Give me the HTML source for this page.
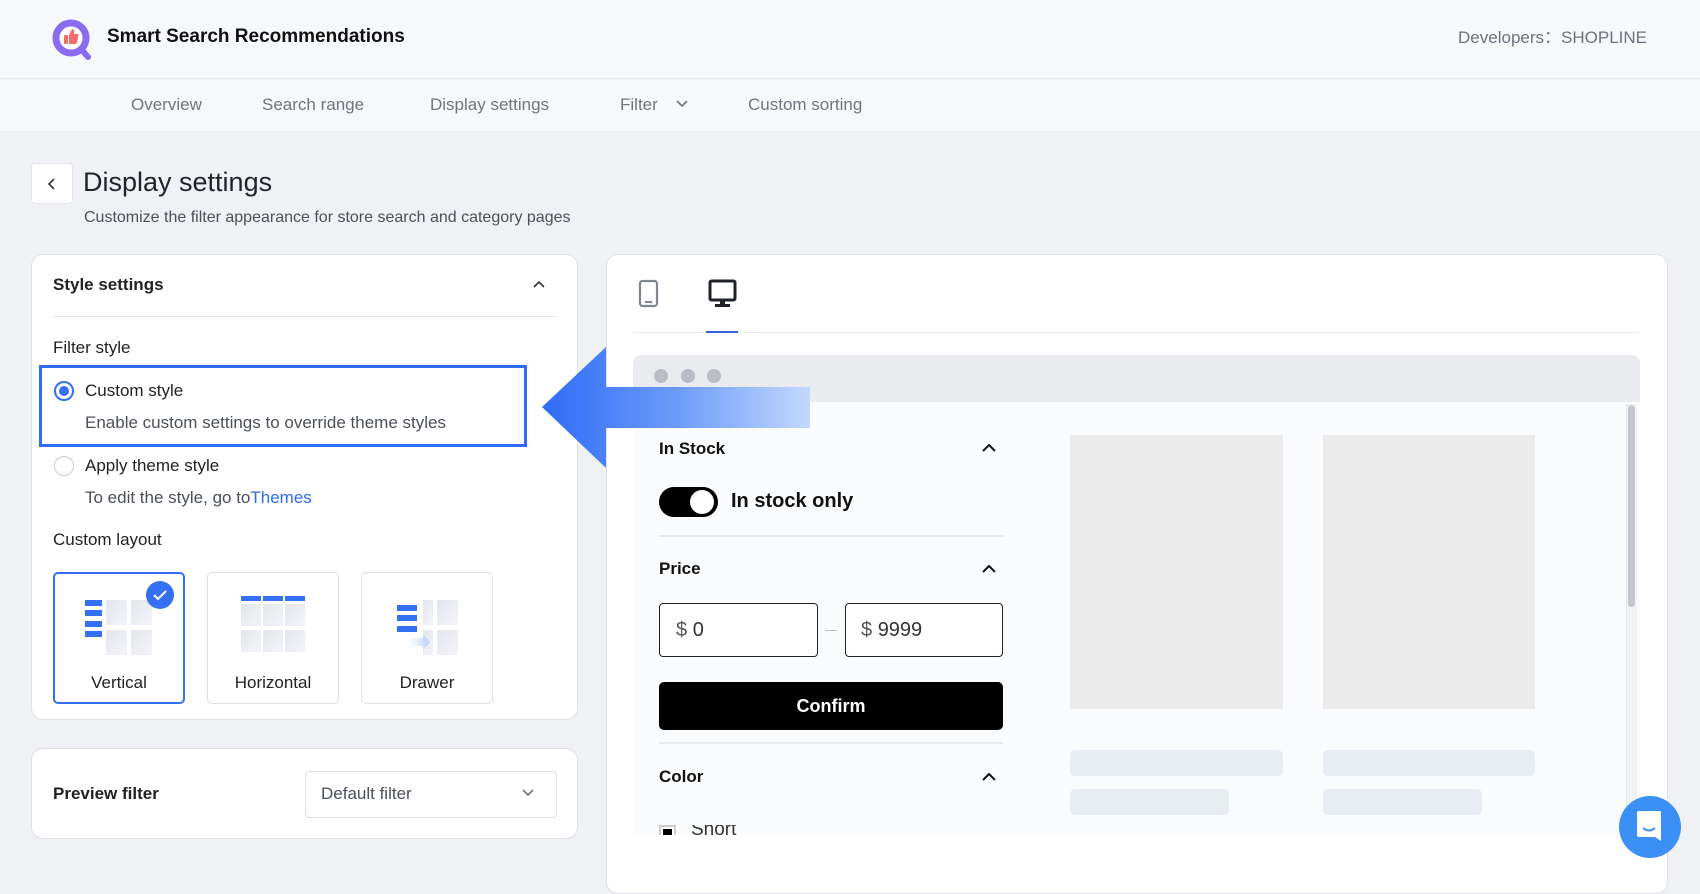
<!DOCTYPE html>
<html><head><meta charset="utf-8"><style>
*{margin:0;padding:0;box-sizing:border-box}
body{width:1700px;height:866px;overflow:hidden;background:#f0f1f5;font-family:"Liberation Sans",sans-serif;color:#1f2329;position:relative}
.a{position:absolute}
.t{position:absolute;white-space:nowrap;line-height:24px}
</style></head><body>
<!-- header -->
<div class="a" style="left:0;top:0;width:1700px;height:79px;background:#f7f8fb;border-bottom:1px solid #e6e8ee"></div>
<svg class="a" style="left:50px;top:18px" width="46" height="44" viewBox="0 0 46 44">
<circle cx="21" cy="20" r="15" fill="none" stroke="#8b6cf0" stroke-width="7"/>
<line x1="31" y1="31" x2="38" y2="39" stroke="#8b6cf0" stroke-width="6" stroke-linecap="round"/>
<circle cx="21" cy="20" r="11.5" fill="#fff"/>
<rect x="14" y="17" width="4" height="9" rx="1" fill="#f36b6b"/><path d="M19 17 L22 11 Q25 11 24 16 L28 16 Q29 17 28 19 L27 25 Q26 26 24 26 L19 26Z" fill="#f36b6b"/>
</svg>
<div class="t" style="left:107px;top:25px;font-size:19px;font-weight:bold;color:#111">Smart Search Recommendations</div>
<div class="t" style="right:53px;top:26px;font-size:17px;color:#6b7280">Developers：SHOPLINE</div>
<div class="a" style="left:0;top:80px;width:1700px;height:51px;background:#f7f8fb"></div>
<div class="t" style="left:131px;top:93px;font-size:17px;color:#6f7580">Overview</div>
<div class="t" style="left:262px;top:93px;font-size:17px;color:#6f7580">Search range</div>
<div class="t" style="left:430px;top:93px;font-size:17px;color:#6f7580">Display settings</div>
<div class="t" style="left:620px;top:93px;font-size:17px;color:#6f7580">Filter</div>
<svg class="a" style="left:675px;top:99px" width="14" height="10"><path d="M2 2 L7 7 L12 2" fill="none" stroke="#6f7580" stroke-width="1.6"/></svg>
<div class="t" style="left:748px;top:93px;font-size:17px;color:#6f7580">Custom sorting</div>
<!-- title -->
<div class="a" style="left:31px;top:163px;width:42px;height:41px;background:#fff;border:1px solid #e3e5ea;border-radius:4px"></div>
<svg class="a" style="left:46px;top:177px" width="12" height="14"><path d="M8 2 L3 7 L8 12" fill="none" stroke="#333" stroke-width="1.6"/></svg>
<div class="t" style="left:83px;top:166px;font-size:27px;line-height:32px;color:#1f2329">Display settings</div>
<div class="t" style="left:84px;top:206px;font-size:16px;color:#4b5058">Customize the filter appearance for store search and category pages</div>
<!-- left card -->
<div class="a" style="left:31px;top:254px;width:547px;height:466px;background:#fff;border:1px solid #dfe1e6;border-radius:12px"></div>
<div class="t" style="left:53px;top:273px;font-size:17px;font-weight:bold;color:#222">Style settings</div>
<svg class="a" style="left:532px;top:279px" width="14" height="10"><path d="M2 8 L7 3 L12 8" fill="none" stroke="#333" stroke-width="1.6"/></svg>
<div class="a" style="left:53px;top:316px;width:504px;height:1px;background:#e3e5ea"></div>
<div class="t" style="left:53px;top:336px;font-size:17px;color:#222">Filter style</div>
<div class="a" style="left:39px;top:365px;width:488px;height:82px;border:3px solid #2f6bf5"></div>
<div class="a" style="left:54px;top:381px;width:20px;height:20px;border:2px solid #3470f2;border-radius:50%"></div>
<div class="a" style="left:59px;top:386px;width:10px;height:10px;background:#3470f2;border-radius:50%"></div>
<div class="t" style="left:85px;top:379px;font-size:17px;color:#222">Custom style</div>
<div class="t" style="left:85px;top:411px;font-size:17px;color:#4b5058">Enable custom settings to override theme styles</div>
<div class="a" style="left:54px;top:456px;width:20px;height:20px;border:1.5px solid #c9ccd3;border-radius:50%"></div>
<div class="t" style="left:85px;top:454px;font-size:17px;color:#222">Apply theme style</div>
<div class="t" style="left:85px;top:486px;font-size:17px;color:#4b5058">To edit the style, go to<span style="color:#2f6bf5">Themes</span></div>
<div class="t" style="left:53px;top:528px;font-size:17px;color:#222">Custom layout</div>
<!-- layout cards -->
<div class="a" style="left:53px;top:572px;width:132px;height:132px;border:2px solid #3470f2;border-radius:5px;background:#fff"></div>
<div class="a" style="left:207px;top:572px;width:132px;height:132px;border:1px solid #dcdfe4;border-radius:5px;background:#fff"></div>
<div class="a" style="left:361px;top:572px;width:132px;height:132px;border:1px solid #dcdfe4;border-radius:5px;background:#fff"></div>
<svg class="a" style="left:53px;top:572px" width="440" height="100">
<defs><linearGradient id="g" x1="0" x2="1" y1="0" y2="1"><stop offset="0" stop-color="#e3e6ee"/><stop offset="1" stop-color="#f3f4f8"/></linearGradient>
<linearGradient id="ar" x1="0" x2="1"><stop offset="0" stop-color="#cfe0ff" stop-opacity="0"/><stop offset="1" stop-color="#b8d0fb"/></linearGradient></defs>
<g fill="#3470f2"><rect x="32" y="28" width="17" height="6"/><rect x="32" y="38" width="17" height="6"/><rect x="32" y="49" width="17" height="6"/><rect x="32" y="59" width="17" height="6"/></g>
<g fill="url(#g)"><rect x="53" y="28" width="21" height="25"/><rect x="78" y="28" width="21" height="25"/><rect x="53" y="58" width="21" height="25"/><rect x="78" y="58" width="21" height="25"/></g>
<circle cx="107" cy="23" r="14" fill="#3470f2"/><path d="M101 23 L105 27 L113 19" fill="none" stroke="#fff" stroke-width="2"/>
<g transform="translate(18,0)">
<g fill="#3470f2"><rect x="170" y="24" width="20" height="5"/><rect x="192" y="24" width="20" height="5"/><rect x="214" y="24" width="20" height="5"/></g>
<g fill="url(#g)"><rect x="170" y="32" width="20" height="22"/><rect x="192" y="32" width="20" height="22"/><rect x="214" y="32" width="20" height="22"/><rect x="170" y="58" width="20" height="22"/><rect x="192" y="58" width="20" height="22"/><rect x="214" y="58" width="20" height="22"/></g>
</g>
<g transform="translate(30,0)">
<g fill="url(#g)"><rect x="340" y="28" width="10" height="25"/><rect x="354" y="28" width="21" height="25"/><rect x="340" y="58" width="10" height="25"/><rect x="354" y="58" width="21" height="25"/></g>
<g fill="#3470f2"><rect x="314" y="33" width="20" height="6"/><rect x="314" y="43" width="20" height="6"/><rect x="314" y="54" width="20" height="6"/></g>
<path d="M324 66 H340 V62 L347 70 L340 78 V74 H324Z" fill="url(#ar)"/>
</g>
</svg>
<div class="t" style="left:53px;top:671px;width:132px;text-align:center;font-size:17px;color:#222">Vertical</div>
<div class="t" style="left:207px;top:671px;width:132px;text-align:center;font-size:17px;color:#222">Horizontal</div>
<div class="t" style="left:361px;top:671px;width:132px;text-align:center;font-size:17px;color:#222">Drawer</div>
<!-- preview filter card -->
<div class="a" style="left:31px;top:748px;width:547px;height:91px;background:#fff;border:1px solid #dfe1e6;border-radius:12px"></div>
<div class="t" style="left:53px;top:782px;font-size:17px;font-weight:bold;color:#222">Preview filter</div>
<div class="a" style="left:305px;top:771px;width:252px;height:47px;border:1px solid #dcdfe4;border-radius:4px;background:#fff"></div>
<div class="t" style="left:321px;top:782px;font-size:17px;color:#4b5058">Default filter</div>
<svg class="a" style="left:522px;top:789px" width="12" height="8"><path d="M1 1 L6 6 L11 1" fill="none" stroke="#555" stroke-width="1.3"/></svg>
<!-- right card -->
<div class="a" style="left:606px;top:254px;width:1062px;height:640px;background:#fff;border:1px solid #dfe1e6;border-radius:12px"></div>
<svg class="a" style="left:638px;top:279px" width="22" height="30"><rect x="2" y="2" width="17" height="25" rx="2.5" fill="none" stroke="#80858f" stroke-width="2.2"/><rect x="7" y="22" width="7" height="2" fill="#80858f"/></svg>
<svg class="a" style="left:708px;top:279px" width="30" height="30"><rect x="2" y="2" width="25" height="19" rx="1.5" fill="none" stroke="#1f2329" stroke-width="3"/><rect x="12" y="21" width="5" height="4" fill="#1f2329"/><rect x="7" y="25" width="15" height="3" fill="#1f2329"/></svg>
<div class="a" style="left:633px;top:332px;width:1006px;height:1px;background:#e8eaee"></div>
<div class="a" style="left:706px;top:331px;width:32px;height:2px;background:#3364d6"></div>
<div class="a" style="left:633px;top:355px;width:1007px;height:480px;background:#fafbfc;border-radius:8px 8px 0 0;overflow:hidden">
 <div class="a" style="left:0;top:0;width:1007px;height:47px;background:#e9ebef"></div>
 <div class="a" style="left:21px;top:14px;width:14px;height:14px;border-radius:50%;background:#b9bcc4"></div>
 <div class="a" style="left:48px;top:14px;width:14px;height:14px;border-radius:50%;background:#b9bcc4"></div>
 <div class="a" style="left:74px;top:14px;width:14px;height:14px;border-radius:50%;background:#b9bcc4"></div>
 <div class="a" style="left:993px;top:49px;width:11px;height:431px;background:#f1f2f4;border-left:1px solid #e6e8ec"></div>
 <div class="a" style="left:995px;top:50px;width:7px;height:202px;background:#c3c6cc;border-radius:4px"></div>
</div>
<!-- filter col -->
<div class="t" style="left:659px;top:437px;font-size:17px;font-weight:bold;color:#111">In Stock</div>
<svg class="a" style="left:981px;top:443px" width="16" height="10"><path d="M2 8 L8 2 L14 8" fill="none" stroke="#111" stroke-width="2"/></svg>
<div class="a" style="left:659px;top:487px;width:59px;height:30px;background:#000;border-radius:15px"></div>
<div class="a" style="left:690px;top:490px;width:24px;height:24px;background:#fff;border-radius:50%"></div>
<div class="t" style="left:731px;top:489px;font-size:20px;font-weight:bold;color:#111">In stock only</div>
<div class="a" style="left:659px;top:535px;width:344px;height:2px;background:#e6e8ec"></div>
<div class="t" style="left:659px;top:557px;font-size:17px;font-weight:bold;color:#111">Price</div>
<svg class="a" style="left:981px;top:564px" width="16" height="10"><path d="M2 8 L8 2 L14 8" fill="none" stroke="#111" stroke-width="2"/></svg>
<div class="a" style="left:659px;top:603px;width:159px;height:54px;border:1.5px solid #222;border-radius:4px;background:#fff"></div>
<div class="t" style="left:676px;top:618px;font-size:20px;color:#555">$ <span style="color:#333">0</span></div>
<div class="a" style="left:825px;top:630px;width:12px;height:1px;background:#bbb"></div>
<div class="a" style="left:845px;top:603px;width:158px;height:54px;border:1.5px solid #222;border-radius:4px;background:#fff"></div>
<div class="t" style="left:861px;top:618px;font-size:20px;color:#555">$ <span style="color:#333">9999</span></div>
<div class="a" style="left:659px;top:682px;width:344px;height:48px;background:#000;border-radius:5px"></div>
<div class="t" style="left:659px;top:694px;width:344px;text-align:center;font-size:18px;font-weight:bold;color:#fff">Confirm</div>
<div class="a" style="left:659px;top:742px;width:344px;height:2px;background:#e6e8ec"></div>
<div class="t" style="left:659px;top:765px;font-size:17px;font-weight:bold;color:#111">Color</div>
<svg class="a" style="left:981px;top:772px" width="16" height="10"><path d="M2 8 L8 2 L14 8" fill="none" stroke="#111" stroke-width="2"/></svg>
<div class="a" style="left:659px;top:825px;width:400px;height:10px;overflow:hidden">
 <div class="a" style="left:0;top:0;width:17px;height:17px;border:2px solid #ccc;background:#fff"></div>
 <div class="a" style="left:4px;top:4px;width:9px;height:9px;background:#000"></div>
 <div class="t" style="left:32px;top:-7px;font-size:19px;color:#333">Short</div>
</div>
<!-- products -->
<div class="a" style="left:1070px;top:435px;width:213px;height:274px;background:#ebebeb"></div>
<div class="a" style="left:1323px;top:435px;width:212px;height:274px;background:#ebebeb"></div>
<div class="a" style="left:1070px;top:750px;width:213px;height:26px;background:#e8edf4;border-radius:5px"></div>
<div class="a" style="left:1323px;top:750px;width:212px;height:26px;background:#e8edf4;border-radius:5px"></div>
<div class="a" style="left:1070px;top:789px;width:159px;height:26px;background:#e8edf4;border-radius:5px"></div>
<div class="a" style="left:1323px;top:789px;width:159px;height:26px;background:#e8edf4;border-radius:5px"></div>
<!-- arrow -->
<svg class="a" style="left:540px;top:345px" width="275" height="125">
<defs><linearGradient id="ag" x1="0" x2="1"><stop offset="0" stop-color="#2f6bf7"/><stop offset="0.5" stop-color="#6b9bf9"/><stop offset="1" stop-color="#c3d8fd"/></linearGradient></defs>
<path d="M2 62 L66 2 L66 42 L270 42 L270 83 L66 83 L66 123 Z" fill="url(#ag)"/>
</svg>
<!-- chat -->
<div class="a" style="left:1619px;top:796px;width:62px;height:62px;border-radius:50%;background:#3b8ff5"></div>
<svg class="a" style="left:1635px;top:810px" width="30" height="34"><path d="M2 3 Q2 1 4 1 H24 Q26 1 26 3 V31 L20 27 H4 Q2 27 2 25Z" fill="#fff"/><path d="M8 18 Q14 23 20 18" fill="none" stroke="#3b8ff5" stroke-width="2"/></svg>
</body></html>
